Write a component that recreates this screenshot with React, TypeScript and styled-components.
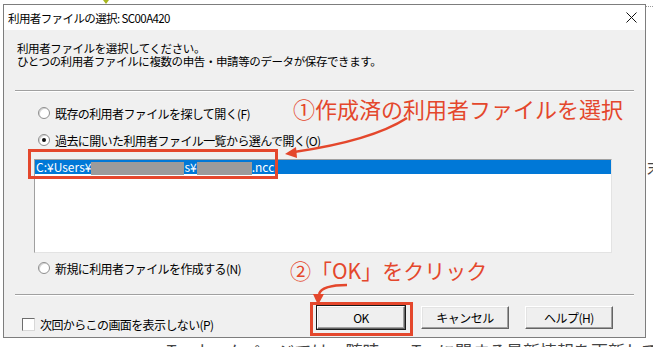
import React from 'react';
import styled, { createGlobalStyle } from 'styled-components';

const RED = '#e4472c';

const GlobalStyle = createGlobalStyle`
  html, body {
    margin: 0;
    padding: 0;
    background: #fff;
  }
  body {
    font-family: "Noto Sans CJK JP", "Noto Sans", sans-serif;
    color: #000;
  }
`;

const Page = styled.div`
  position: relative;
  width: 653px;
  height: 347px;
  overflow: hidden;
  background: #fff;
  display: flex;
  flex-direction: column;
`;

const TopStrip = styled.div`
  height: 4px;
  padding-left: 103px;
  display: flex;
`;

const MainRow = styled.div`
  display: flex;
`;

const Window = styled.div`
  margin-left: 3px;
  width: 643px;
  height: 334px;
  box-sizing: border-box;
  border: 1px solid #7d7d7d;
  display: flex;
  flex-direction: column;
  flex-shrink: 0;
`;

const TitleBar = styled.div`
  height: 25px;
  background: #fff;
  display: flex;
  align-items: center;
  justify-content: space-between;
  padding: 0 8px 0 4px;
`;

const Title = styled.span`
  font-size: 11.5px;
  letter-spacing: -0.6px;
  line-height: 14px;
`;

const Body = styled.div`
  flex: 1;
  background: #f0f0f0;
  padding: 12px 11px 0 11px;
  display: flex;
  flex-direction: column;
`;

const DescLine = styled.div`
  margin-left: 2px;
  height: 13px;
  font-size: 11.5px;
  line-height: 13px;
  letter-spacing: -0.4px;
`;

const Separator = styled.div<{ $top: number }>`
  margin-top: ${(p) => p.$top}px;
  border-top: 1px solid #a0a0a0;
  border-bottom: 1px solid #fff;
`;

const RadioRow = styled.label<{ $top: number }>`
  margin-top: ${(p) => p.$top}px;
  margin-left: 23px;
  height: 16px;
  display: flex;
  align-items: center;
  gap: 5px;
  font-size: 12px;
  letter-spacing: -0.6px;
`;

const RadioDot = styled.span<{ $checked?: boolean }>`
  width: 12px;
  height: 12px;
  box-sizing: border-box;
  border-radius: 50%;
  border: 1px solid #8e8e8e;
  background: #fff;
  box-shadow: inset 1px 1px 0 #d4d4d4;
  display: flex;
  align-items: center;
  justify-content: center;

  &::after {
    content: '';
    width: 4px;
    height: 4px;
    border-radius: 50%;
    background: ${(p) => (p.$checked ? '#111' : 'transparent')};
  }
`;

const ListBox = styled.div`
  margin-top: 11px;
  margin-left: 19px;
  width: 578px;
  height: 94px;
  box-sizing: border-box;
  background: #fff;
  border: 1px solid;
  border-color: #a0a0a0 #e3e3e3 #e3e3e3 #a0a0a0;
`;

const SelectedItem = styled.div`
  height: 14px;
  background: #0078d7;
  color: #fff;
  font-size: 12px;
  line-height: 14px;
  padding-left: 1px;
  display: flex;
  align-items: center;
  white-space: nowrap;
`;

const Redacted = styled.span<{ $w: number }>`
  display: inline-block;
  width: ${(p) => p.$w}px;
  height: 13px;
  margin-top: 2px;
  background: #9b9b9b;
`;

const BottomRow = styled.div`
  margin-top: 10px;
  display: flex;
  align-items: flex-start;
`;

const CheckRow = styled.label`
  margin-top: 12px;
  margin-left: 7px;
  display: flex;
  align-items: center;
  gap: 5px;
  font-size: 12px;
  letter-spacing: -0.6px;
  line-height: 13px;
`;

const CheckBox = styled.span`
  width: 13px;
  height: 13px;
  box-sizing: border-box;
  background: #fff;
  border: 1px solid;
  border-color: #6d6d6d #d8d8d8 #d8d8d8 #6d6d6d;
`;

const Buttons = styled.div`
  margin-left: auto;
  margin-right: 21px;
  display: flex;
  gap: 16px;
`;

const Button = styled.button<{ $default?: boolean }>`
  width: 88px;
  height: 23px;
  box-sizing: border-box;
  padding: 0;
  font-family: inherit;
  font-size: 12px;
  letter-spacing: -0.5px;
  color: #000;
  background: #efefef;
  border: 1px solid;
  border-color: #fff #646464 #646464 #fff;
  box-shadow: inset -1px -1px 0 #a0a0a0, inset 1px 1px 0 #e3e3e3;
  outline: ${(p) => (p.$default ? '1px solid #1a1a1a' : 'none')};
  outline-offset: 0;
`;

const RightStrip = styled.div`
  flex: 1;
  display: flex;
  flex-direction: column;
  overflow: hidden;
`;

const DottedLine = styled.div`
  margin-top: 2px;
  border-top: 1px dotted #9a9a9a;
`;

const SideText = styled.span`
  margin-top: 148px;
  margin-left: 1px;
  font-size: 16px;
  color: #444;
  white-space: nowrap;
`;

const PageText = styled.div`
  margin-top: 3px;
  margin-left: 135px;
  font-size: 17px;
  line-height: 20px;
  color: #444;
  white-space: nowrap;
`;

const RedBox = styled.div<{ $x: number; $y: number; $w: number; $h: number }>`
  position: absolute;
  left: ${(p) => p.$x}px;
  top: ${(p) => p.$y}px;
  width: ${(p) => p.$w}px;
  height: ${(p) => p.$h}px;
  box-sizing: border-box;
  border: 3px solid ${RED};
`;

const Note = styled.div<{ $x: number; $y: number; $size: number }>`
  position: absolute;
  left: ${(p) => p.$x}px;
  top: ${(p) => p.$y}px;
  font-size: ${(p) => p.$size}px;
  line-height: ${(p) => p.$size}px;
  color: ${RED};
  white-space: nowrap;
`;

const ArrowLayer = styled.svg`
  position: absolute;
  left: 0;
  top: 0;
  pointer-events: none;
`;

export default function App() {
  return (
    <>
      <GlobalStyle />
      <Page>
        <TopStrip>
          <svg width="6" height="4" viewBox="0 0 6 4">
            <path d="M0 0 H6 L3 4 Z" fill="#a7b51f" />
          </svg>
        </TopStrip>
        <MainRow>
          <Window>
            <TitleBar>
              <Title>利用者ファイルの選択: SC00A420</Title>
              <svg width="11" height="11" viewBox="0 0 11 11">
                <path d="M0.5 0.5 L10.5 10.5 M10.5 0.5 L0.5 10.5" stroke="#111" strokeWidth="1" />
              </svg>
            </TitleBar>
            <Body>
              <DescLine>利用者ファイルを選択してください。</DescLine>
              <DescLine>ひとつの利用者ファイルに複数の申告・申請等のデータが保存できます。</DescLine>
              <Separator $top={22} />
              <RadioRow $top={13}>
                <RadioDot />
                既存の利用者ファイルを探して開く(F)
              </RadioRow>
              <RadioRow $top={11}>
                <RadioDot $checked />
                過去に開いた利用者ファイル一覧から選んで開く(O)
              </RadioRow>
              <ListBox>
                <SelectedItem>
                  C:¥Users¥
                  <Redacted $w={93} />
                  s¥
                  <Redacted $w={55} />
                  .ncc
                </SelectedItem>
              </ListBox>
              <RadioRow $top={7}>
                <RadioDot />
                新規に利用者ファイルを作成する(N)
              </RadioRow>
              <Separator $top={18} />
              <BottomRow>
                <CheckRow>
                  <CheckBox />
                  次回からこの画面を表示しない(P)
                </CheckRow>
                <Buttons>
                  <Button $default>OK</Button>
                  <Button>キャンセル</Button>
                  <Button>ヘルプ(H)</Button>
                </Buttons>
              </BottomRow>
            </Body>
          </Window>
          <RightStrip>
            <DottedLine />
            <SideText>末(</SideText>
          </RightStrip>
        </MainRow>
        <PageText>・e-Taxホームページでは、随時、e-Taxに関する最新情報を更新しています。</PageText>

        <RedBox $x={28} $y={149} $w={250} $h={30} />
        <RedBox $x={310} $y={302} $w={103} $h={34} />
        <Note $x={293} $y={97} $size={22}>①作成済の利用者ファイルを選択</Note>
        <Note $x={290} $y={260} $size={21}>②「OK」をクリック</Note>
        <ArrowLayer width="653" height="347" viewBox="0 0 653 347">
          <path d="M407 118 C382 134 342 145 294 152" fill="none" stroke={RED} strokeWidth="2.5" />
          <polygon points="285,154 296,147 297,158" fill={RED} />
          <path d="M347 285 C332 285 321 288 319 294" fill="none" stroke={RED} strokeWidth="2.5" />
          <polygon points="318,305 313,294 324,294" fill={RED} />
        </ArrowLayer>
      </Page>
    </>
  );
}
